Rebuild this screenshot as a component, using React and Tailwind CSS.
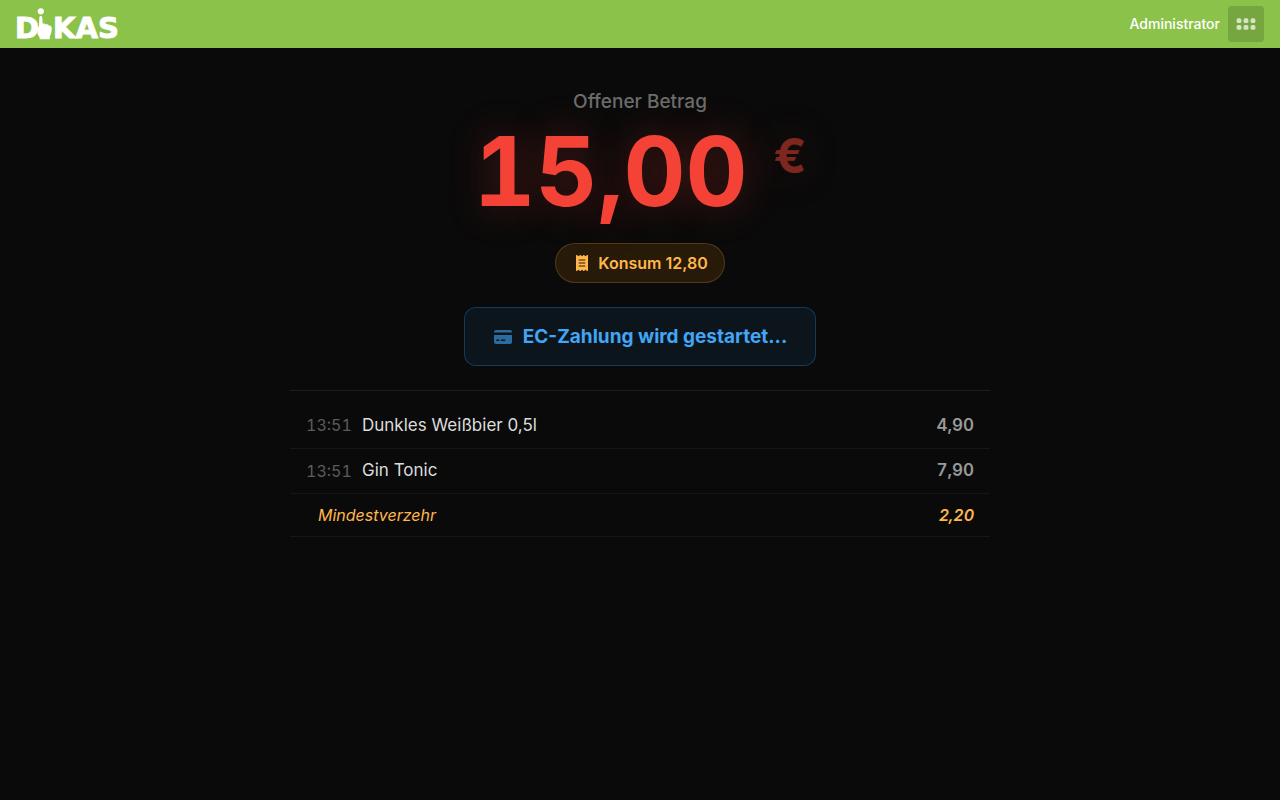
import { FaReceipt } from 'react-icons/fa6';

const items = [
    { id: 1, time: '13:51', name: 'Dunkles Weißbier 0,5l', price: '4,90' },
    { id: 2, time: '13:51', name: 'Gin Tonic', price: '7,90' },
];

const Logo = () => (
    <a
        href="/"
        aria-label="DiKAS"
        className="-ml-px flex items-end font-['DejaVu_Sans',sans-serif] text-[29px] leading-6 font-bold text-white [-webkit-text-stroke:1px_white]"
    >
        <span>D</span>
        <svg className="-ml-0.5 h-8 w-4" viewBox="0 0 16 32" fill="currentColor" aria-hidden="true">
            <circle cx="3.8" cy="3.3" r="3.1" />
            <path d="M2.3 9.6C2.3 7.5 5.2 7.5 5.3 9.6L5.7 15.8C7 15.2 8.2 15.5 8.8 16.5C10 16 11.3 16.5 11.8 17.5C13.6 17.3 14.7 18.3 14.7 20C14.7 23.5 14.3 26 12.8 28.2V31.3H2.6V29.3C1.2 27.8.3 25.7.2 23.3C0 21 .3 19.3 2 18.5Z" />
        </svg>
        <span>KAS</span>
    </a>
);

const CardIcon = () => (
    <svg className="h-4 w-5 opacity-60" viewBox="0 0 20 16" fill="currentColor" aria-hidden="true">
        <path d="M3 1h14a2 2 0 0 1 2 2v.6H1V3a2 2 0 0 1 2-2z" />
        <path
            fillRule="evenodd"
            d="M1 5.900h18V13a2 2 0 0 1-2 2H3a2 2 0 0 1-2-2zM3.300 10.600h3v1.500h-3zM8 10.600h4.200v1.500H8z"
        />
    </svg>
);

const Header = () => (
    <header className="flex h-12 items-center justify-between bg-[#8bc34a] px-4">
        <Logo />
        <div className="flex items-center gap-2">
            <span className="text-sm font-medium text-white">Administrator</span>
            <button
                type="button"
                aria-label="Menü"
                className="flex size-9 items-center justify-center rounded bg-black/15 text-white/70"
            >
                {/* 3x2 dot grid */}
                <svg className="h-3 w-5" viewBox="0 0 20 12" fill="currentColor" aria-hidden="true">
                    {[3, 10, 17].map((x) => (
                        <g key={x}>
                            <rect x={x - 2.4} y="0.3" width="4.8" height="4.8" rx="1.6" />
                            <rect x={x - 2.4} y="7" width="4.8" height="4.8" rx="1.6" />
                        </g>
                    ))}
                </svg>
            </button>
        </div>
    </header>
);

const App = () => {
    return (
        <div className="min-h-screen bg-[#0a0a0a] font-['Inter',sans-serif]">
            <Header />
            <main className="mx-auto flex max-w-[700px] flex-col items-center pt-10">
                <h1 className="text-[19px] leading-7 font-medium text-[#6c6c6c]">Offener Betrag</h1>

                <div className="mt-1.5 flex items-start gap-[26px] font-bold text-[#f44336] tabular-nums [text-shadow:0_0_40px_rgba(244,67,54,0.3)]">
                    <span className="text-8xl leading-[98px]">15,00</span>
                    <span className="text-5xl leading-[68px] opacity-50">€</span>
                </div>

                <div className="mt-[23px] flex h-10 items-center gap-1.5 rounded-full border border-[#ffb74d]/20 bg-[#ff9800]/12 px-4 font-semibold text-[#ffb74d]">
                    <FaReceipt className="h-4 w-5" />
                    <span>Konsum 12,80</span>
                </div>

                <div
                    role="status"
                    className="mt-6 flex items-center gap-2.5 rounded-xl border border-[#2196f3]/30 bg-[#2196f3]/8 px-7 py-3.5 text-[19px] leading-[29px] font-bold text-[#42a5f5]"
                >
                    <CardIcon />
                    <span>EC-Zahlung wird gestartet...</span>
                </div>

                <div className="mt-6 w-full border-t border-white/8 pt-3">
                    <table className="w-full border-collapse">
                        <tbody>
                            {items.map((item) => (
                                <tr key={item.id} className="h-[45px] border-b border-white/5">
                                    <td className="w-[72px] pl-4 text-base text-[#5c5c5c] tabular-nums">{item.time}</td>
                                    <td className="text-[17px] text-[#dcdcdc]">{item.name}</td>
                                    <td className="pr-4 text-right text-[17px] font-semibold text-[#999999] tabular-nums">
                                        {item.price}
                                    </td>
                                </tr>
                            ))}
                            <tr className="h-[43px] border-b border-white/5 text-base text-[#ffb74d] italic">
                                <td colSpan={2} className="pl-7">
                                    Mindestverzehr
                                </td>
                                <td className="pr-4 text-right font-semibold tabular-nums">2,20</td>
                            </tr>
                        </tbody>
                    </table>
                </div>
            </main>
        </div>
    );
};

export default App;
